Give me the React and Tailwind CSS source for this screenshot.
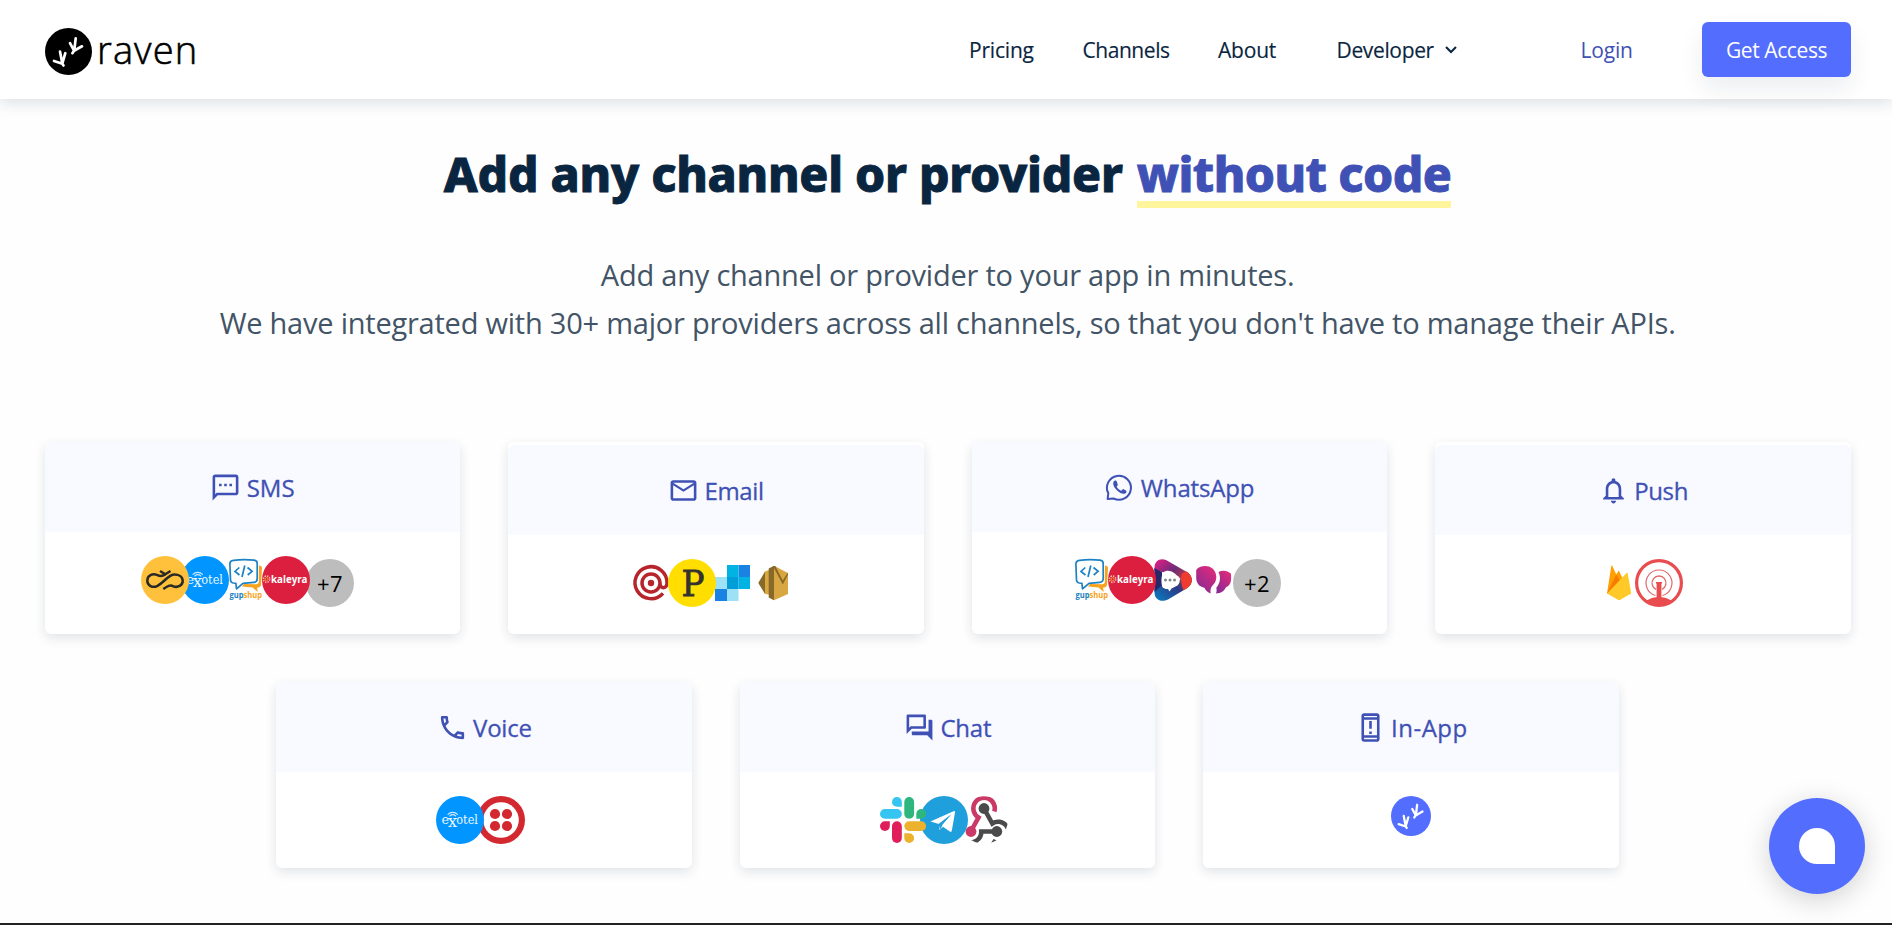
import {
  MdOutlineSms,
  MdMailOutline,
  MdNotificationsNone,
  MdOutlineForum,
  MdOutlinePermDeviceInformation,
  MdOutlineCall,
} from 'react-icons/md';

function Feet() {
  return (
    <g stroke="#fff" strokeWidth="2.7" strokeLinecap="round" strokeLinejoin="round" fill="none">
      <path d="M15 23.5 17.3 35.5 20.3 25.2M9 33 17.3 35.8 18.5 37.5" />
      <path d="M30.7 10.3 29.2 22.8 25 15.2M37 18.3 29 22.8 27.4 25.2" />
    </g>
  );
}

function RavenMark({ size, color }) {
  return (
    <svg width={size} height={size} viewBox="0 0 47 47" className="shrink-0">
      <circle cx="23.5" cy="23.5" r="23.5" fill={color} />
      <Feet />
    </svg>
  );
}

function WhatsAppIcon() {
  return (
    <svg width="31" height="31" viewBox="0 0 31 31" fill="none" className="shrink-0">
      <path
        d="M3.600 27 4.300 21.300A12 12 0 1 1 9.600 26.500L3.600 27Z"
        stroke="currentColor"
        strokeWidth="2"
        strokeLinejoin="round"
      />
      <path
        d="M11.2 8.6c-.9 0-2 1.300-2 3 0 1.300.6 3 2.300 5.200 2 2.600 4.700 4.700 7.700 5 1.800.2 3.300-1 3.300-2.400 0-.5-.2-.7-.6-1l-2.300-1.200c-.5-.2-.8-.1-1.100.3l-.9 1c-.3.3-.6.3-1 .1-1.600-.7-3-2-3.800-3.500-.2-.4-.1-.6.200-.9l.6-.8c.3-.4.2-.8.1-1.100l-.9-2.600c-.2-.6-.6-1.100-1.600-1.100Z"
        fill="currentColor"
      />
    </svg>
  );
}

function Logo({ children, className }) {
  return (
    <svg viewBox="0 0 48 48" className={`relative size-12 shrink-0 overflow-visible ${className}`}>
      {children}
    </svg>
  );
}

function Sinch({ className = '' }) {
  return (
    <Logo className={className}>
      <circle cx="24" cy="24" r="24" fill="#ffc13b" />
      <g fill="none" stroke="#2b2a26" strokeWidth="2.500" strokeLinejoin="round">
        <path d="M19 15 24.300 18.300 29.500 15" />
        <path d="M24.300 18.300C21 21 19 20.500 16.500 19.200 11.500 17 6.300 19.500 6.300 24.500s5.200 8 10.200 5.300c3.500-2 5.500-4 8-6.300 3.500-3.200 5.500-5 9-5 4 0 8.200 2 8.200 6.500s-5 7-9.500 5.300" />
        <path d="M32.500 30.300C29 28.500 26.500 30 22.300 33" />
      </g>
    </Logo>
  );
}

function Exotel({ className = '' }) {
  return (
    <Logo className={className}>
      <circle cx="24" cy="24" r="24" fill="#0095ff" />
      <g fill="#e8f5ff" fontFamily="'DejaVu Serif', serif" fontSize="12.500">
        <text x="5.500" y="27.800" textLength="7.500" lengthAdjust="spacingAndGlyphs">e</text>
        <text x="11.800" y="31.300" fontSize="16" textLength="9.500" lengthAdjust="spacingAndGlyphs">x</text>
        <text x="20.300" y="27.800" textLength="21.700" lengthAdjust="spacingAndGlyphs">otel</text>
      </g>
      <g fill="none" stroke="#cfeaff" strokeWidth="1.100" strokeLinecap="round">
        <path d="M12 18.300c2.500-2.600 7-2.600 9.500 0M13.800 20c1.800-1.600 4.200-1.600 6 0" />
      </g>
    </Logo>
  );
}

function Gupshup({ className = '' }) {
  return (
    <Logo className={className}>
      <path d="M38 9.500c2 .3 3.200 1 3 3l-1 16c-.2 2-1.200 2.800-3 3l-1 .2.800 4.300-5.300-4.500-10.500-1 2-2.500 12 .3c2 0 2.700-1 2.800-2.500Z" fill="#f8a31d" />
      <path d="M12.500 4.300C19 3.400 27 3.400 33 4.200c2 .3 3.200 1.300 3.200 3.300v15c0 2.500-1.300 3.700-3.500 3.900L22 27.300l-6.500 5.500-.6-5.400-2.700-.4c-1.600-.3-2.600-1.300-2.700-3L8.900 8c-.1-2.300 1.300-3.400 3.600-3.700Z" fill="#fff" stroke="#1c82c4" strokeWidth="1.700" strokeLinejoin="round" />
      <path d="M18.300 11.500 14 15.500l4.500 3.500M26.500 11.500l4.600 3.800-4.400 3.700M23.800 9.500 21 21" fill="none" stroke="#1c82c4" strokeWidth="1.700" />
      <g fontFamily="'Open Sans', sans-serif" fontWeight="700" fontSize="9">
        <text x="8.500" y="41.500" fill="#1c82c4" textLength="14" lengthAdjust="spacingAndGlyphs">gup</text>
        <text x="22.500" y="41.500" fill="#f8a31d" textLength="18.500" lengthAdjust="spacingAndGlyphs">shup</text>
      </g>
    </Logo>
  );
}

function Kaleyra({ className = '' }) {
  return (
    <Logo className={className}>
      <circle cx="24" cy="24" r="24" fill="#dc1f3e" />
      <circle cx="4.600" cy="23.200" r="3.200" fill="none" stroke="#f6b9a0" strokeWidth="1.500" strokeDasharray="1.500 1" />
      <circle cx="4.600" cy="23.200" r="1.500" fill="none" stroke="#f39a2c" strokeWidth="1" />
      <text x="9" y="26.800" fill="#fff" fontFamily="'Open Sans', sans-serif" fontWeight="700" fontSize="11" textLength="36.500" lengthAdjust="spacingAndGlyphs">kaleyra</text>
    </Logo>
  );
}

function More({ children, className = '' }) {
  return (
    <div className={`mt-[3px] flex size-12 shrink-0 items-center justify-center rounded-full bg-[#bdbdbd] pt-px text-[22px] tracking-[0.500px] text-black ${className}`}>
      {children}
    </div>
  );
}

function Mailgun({ className = '' }) {
  return (
    <Logo className={className}>
      <g fill="none" stroke="#b7252c" strokeWidth="3.500">
        <path d="M36 34.300A16 16 0 1 1 40 24.500c0 5.500-7.200 5.500-7.200 0" />
        <circle cx="24" cy="24" r="9" />
      </g>
      <circle cx="24" cy="24" r="3.200" fill="#b7252c" />
    </Logo>
  );
}

function Postmark({ className = '' }) {
  return (
    <Logo className={className}>
      <circle cx="24" cy="24" r="24" fill="#ffde00" />
      <text x="13.500" y="37" fill="#34312f" stroke="#34312f" strokeWidth=".8" fontFamily="'DejaVu Serif', serif" fontSize="35" textLength="23" lengthAdjust="spacingAndGlyphs">P</text>
    </Logo>
  );
}

function SendGrid({ className = '' }) {
  return (
    <Logo className={className}>
      <path fill="#9ce1f6" d="M6 18h12v12H6zM18 30h11.500v12H18z" />
      <path fill="#1a82e2" d="M6 30h12v12H6zM29.500 6H41v12H29.500z" />
      <path fill="#00b3e3" d="M18 6h11.500v12H18zM29.500 18H41v12H29.500z" />
      <path fill="#009dd9" d="M18 18h11.500v12H18z" />
    </Logo>
  );
}

function AmazonSes({ className = '' }) {
  return (
    <Logo className={className}>
      <path fill="#876929" d="M9.300 24 16 12.500v22.500z" />
      <path fill="#d9a741" d="M16 12.500 20 11v24.500l-4-.5z" />
      <path fill="#876929" d="M19.700 9.500 25 6.700V41.300l-5.300-2.800z" />
      <path fill="#d9a741" d="M25 6.700 39 14v21l-14 6.300z" />
      <path fill="#876929" d="M24 7.200 26.300 7 33.800 21.500 38.600 13.800 39 15.500 33.800 25.500z" />
    </Logo>
  );
}

function Triangle({ className = '' }) {
  return (
    <Logo className={className}>
      <defs>
        <linearGradient id="triTop" x1="0" y1="0" x2="1" y2="0.800">
          <stop offset="0" stopColor="#ec1c86" />
          <stop offset=".5" stopColor="#6b2c78" />
          <stop offset="1" stopColor="#f0402b" />
        </linearGradient>
        <linearGradient id="triBottom" x1="0" y1="1" x2="1" y2="0">
          <stop offset="0" stopColor="#0a7fc4" />
          <stop offset=".5" stopColor="#2b3a86" />
          <stop offset="1" stopColor="#f0402b" />
        </linearGradient>
      </defs>
      <path d="M6.500 12C6.500 5 12 1.500 18 4l20 11.500c7 4 7.500 12 1.500 16L30 20 6.500 14Z" fill="url(#triTop)" />
      <path d="M6.500 12 13 16c0 6-.5 9 2 16l16-7 7.500-9.500c7.500 4.500 7 13 0 17L20 43.500c-7 3.500-13.500 0-13.500-7Z" fill="url(#triBottom)" />
      <path d="M34 17.500 38 15.500c7.500 4.500 7.500 13 .5 17l-3 1.700c-2-5-3.500-11-1.500-16.700Z" fill="#ee3d2f" />
      <path d="M6.500 12.500 14 16v13l-7.500 7Z" fill="#27286a" />
      <path d="M18 15c5-1 9 2 12.500 6.500 2 3 1.500 5.500-1 8l-6 3-2 3-1.500-2.500c-4 .5-6.500-2-6.500-7 0-6 .5-10 4.500-11Z" fill="#fff" />
      <g fill="#83868c">
        <circle cx="17.500" cy="24" r="1.500" />
        <circle cx="22" cy="24" r="1.500" />
        <circle cx="26.500" cy="24" r="1.500" />
      </g>
    </Logo>
  );
}

function Bubbles({ className = '' }) {
  return (
    <Logo className={className}>
      <defs>
        <linearGradient id="bubble" x1="1" y1="0" x2="0.300" y2="1">
          <stop offset="0" stopColor="#ea2a78" />
          <stop offset="1" stopColor="#8a2b92" />
        </linearGradient>
      </defs>
      <path d="M6.200 11C9 6.500 18 5.500 22.500 9.500c4.800 4.300 5.200 12 .5 16.500-2 2-3 4.500-2.300 8.500-3-1-5-3-6.300-5.800C9.500 28 6.200 24 6.200 19Z" fill="url(#bubble)" />
      <path d="M28.500 13c4-2 9-1.500 12.500 1.800.3 6.500.5 11-5 13.500-1.800 3.800-5 6.200-10 6.200.8-2 .8-3.800.3-5.800 4-4.500 4.700-10.500 2.200-15.700Z" fill="url(#bubble)" />
    </Logo>
  );
}

function Firebase({ className = '' }) {
  return (
    <Logo className={className}>
      <path fill="#ffa000" d="M12 34.500 16.300 7c.2-.6.800-.6 1 0l4 8.500 1.900-3.300c.3-.5.800-.5 1 0L33 31Z" />
      <path fill="#f57c00" d="M12 34.500 21.300 15.500l5.200 8.500Z" />
      <path fill="#ffca28" d="M12 34.500 31.600 14c.4-.4 1-.3 1.100.3L36.200 34.500 25.300 40.800c-.8.4-1.600.4-2.400 0Z" />
    </Logo>
  );
}

function Antenna({ className = '' }) {
  return (
    <Logo className={className}>
      <clipPath id="antennaClip"><circle cx="24" cy="24" r="23" /></clipPath>
      <circle cx="24" cy="24" r="22.400" fill="#fff" stroke="#e84c4f" strokeWidth="3.200" />
      <g fill="none" stroke="#e0666a" strokeWidth="1.200">
        <path d="M20.500 36.500a13 13 0 1 1 7 0" />
        <path d="M21 30.300a7 7 0 1 1 6 0" strokeWidth="1.300" />
      </g>
      <path fill="#e84c4f" d="M21 23h6v1.500h-.6V40h-4.800V24.500H21z" />
      <ellipse cx="24" cy="48" rx="16" ry="10" fill="#e84c4f" clipPath="url(#antennaClip)" />
    </Logo>
  );
}

function Twilio({ className = '' }) {
  return (
    <Logo className={className}>
      <circle cx="24" cy="24" r="24" fill="#d3282f" />
      <circle cx="24" cy="24" r="17.800" fill="#fff" />
      <g fill="#d3282f">
        <circle cx="18" cy="18" r="5.100" />
        <circle cx="30" cy="18" r="5.100" />
        <circle cx="18" cy="30" r="5.100" />
        <circle cx="30" cy="30" r="5.100" />
      </g>
    </Logo>
  );
}

function Slack({ className = '' }) {
  return (
    <Logo className={className}>
      <rect x="1" y="13" width="21.800" height="9.800" rx="4.900" fill="#36c5f0" />
      <path d="M22.800 10.800h-4.900a4.900 4.900 0 1 1 4.900-4.900z" fill="#36c5f0" />
      <rect x="25.300" y="1" width="9.800" height="21.800" rx="4.900" fill="#2eb67d" />
      <path d="M37.300 22.800v-4.900a4.900 4.900 0 1 1 4.900 4.900z" fill="#2eb67d" />
      <path d="M10.800 25.200v4.900a4.900 4.900 0 1 1-4.900-4.900z" fill="#e01e5a" />
      <rect x="13" y="25.200" width="9.800" height="21.800" rx="4.900" fill="#e01e5a" />
      <rect x="25.300" y="25.200" width="21.800" height="9.800" rx="4.900" fill="#ecb22e" />
      <path d="M25.300 37.200h4.900a4.900 4.900 0 1 1-4.900 4.900z" fill="#ecb22e" />
    </Logo>
  );
}

function Telegram({ className = '' }) {
  return (
    <Logo className={className}>
      <circle cx="24" cy="24" r="24" fill="#1f9fdc" />
      <path d="M10.500 25.500 33.500 15.200c1-.4 1.700.2 1.500 1.300L31.800 34.800c-.2 1.100-1 1.400-2 .8l-6.800-4.800-3.500 3.200-.6-6Z" fill="#fff" />
      <path d="M18.500 28 31.500 18 22.300 29.500 20.200 33.800Z" fill="#1f9fdc" />
      <path d="M22 29.200 32.300 18 30 34Z" fill="#fff" />
    </Logo>
  );
}

function Webhook({ className = '' }) {
  return (
    <Logo className={className}>
      <clipPath id="webhookClip"><circle cx="24" cy="24" r="23.800" /></clipPath>
      <g clipPath="url(#webhookClip)" fill="none" strokeWidth="4.600">
        <path stroke="#4a4b4a" d="M24 12.500 32.300 27.500a10.500 10.500 0 1 1 0 17.500" />
        <path stroke="#4a4b4a" d="M4.500 27.500a10.500 10.500 0 1 0 16.800 8H36.500" />
        <path stroke="#cb3a66" d="M34.300 15.500A10.700 10.700 0 1 0 18.500 21.500L11 35" />
        <circle cx="24" cy="12.500" r="5.400" fill="#4a4b4a" stroke="none" />
        <circle cx="11" cy="35.500" r="5.400" fill="#cb3a66" stroke="none" />
        <circle cx="36.800" cy="35.500" r="5.400" fill="#4a4b4a" stroke="none" />
      </g>
    </Logo>
  );
}

function Card({ icon, label, labelClass = '', bodyClass, children, className = '' }) {
  return (
    <section className={`w-[415.500px] rounded-md bg-white shadow-[0_4px_12px_rgba(13,37,62,0.12)] ${className}`}>
      <div className="flex h-[90px] items-center justify-center gap-[5.500px] rounded-t-md bg-[#f9faff] text-[#3f51b5]">
        {icon}
        <span className={`mt-px text-2xl font-medium [-webkit-text-stroke:0.300px_#3f51b5] ${labelClass}`}>{label}</span>
      </div>
      <div className={`flex items-start pt-6 ${bodyClass}`}>{children}</div>
    </section>
  );
}

export default function App() {
  return (
    <div className="flex h-[925px] flex-col overflow-hidden bg-[#fefefe] font-['Open_Sans','Noto_Sans',sans-serif] text-[#0a2540]">
      <header className="flex h-[99px] shrink-0 items-center bg-white pr-[41px] pl-[45px] shadow-[0_4px_14px_rgba(13,37,62,0.14)]">
        <div className="flex items-center pt-[4px]">
          <RavenMark size={47} color="#000" />
          <span className="-mt-[4px] ml-[5px] text-[38px] leading-[47px] font-light tracking-[1.100px] text-black [-webkit-text-stroke:0.600px_#000]">raven</span>
        </div>
        <nav className="ml-auto flex items-center pt-[3px] text-[21px] font-medium [-webkit-text-stroke:0.150px_currentColor]">
          <a className="w-[113.500px] tracking-[-0.200px]">Pricing</a>
          <a className="w-[135.500px] tracking-[-0.450px]">Channels</a>
          <a className="w-[118.500px] tracking-[-0.200px]">About</a>
          <a className="flex w-[244px] items-center tracking-[-0.350px]">
            Developer
            <svg width="12" height="8" viewBox="0 0 12 8" className="-mt-[2px] ml-[11px]" fill="none" stroke="currentColor" strokeWidth="2">
              <path d="M1 1l5 5 5-5" />
            </svg>
          </a>
          <a className="w-[121.500px] font-normal tracking-[-0.200px] text-[#3f51b5] [-webkit-text-stroke:0]">Login</a>
        </nav>
        <button className="h-[55px] w-[149px] rounded-md bg-[#536dfe] pt-[3px] text-[21px] font-medium tracking-[-0.400px] text-white shadow-[0_12px_24px_rgba(13,37,62,0.08)]">
          Get Access
        </button>
      </header>

      <main className="pt-[47px] pr-[41.400px] pl-[44.600px]">
        <h1 className="flex justify-center gap-[14px] font-['Noto_Sans'] text-5xl leading-[55px] font-extrabold">
          <span className="tracking-[-0.250px] [-webkit-text-stroke:0.900px_#0a2540]">Add any channel or provider</span>
          <span className="border-b-[7px] border-[#fff59d] tracking-[-0.550px] text-[#3f51b5] [-webkit-text-stroke:0.900px_#3f51b5]">without code</span>
        </h1>
        <p className="mt-[43px] text-center text-[29px] leading-[48px] tracking-[-0.225px] text-[#425466]">
          Add any channel or provider to your app in minutes.
          <br />
          We have integrated with 30+ major providers across all channels, so that you don't have to manage their APIs.
        </p>

        <div className="mt-[95px] flex justify-between">
          <Card className="h-48" icon={<MdOutlineSms size={31} />} label="SMS" bodyClass="pl-24">
            <Sinch className="z-20" />
            <Exotel className="z-10 -ml-2" />
            <Gupshup className="-ml-2" />
            <Kaleyra className="z-10 -ml-[6.500px]" />
            <More className="-ml-[4px]">+7</More>
          </Card>
          <Card className="h-48 pt-[3px]" icon={<MdMailOutline size={31} />} label="Email" labelClass="tracking-[-0.400px]" bodyClass="pl-[119px]">
            <Mailgun />
            <Postmark className="z-10 -ml-[7px]" />
            <SendGrid className="-ml-[7px]" />
            <AmazonSes className="-ml-2" />
          </Card>
          <Card className="h-48" icon={<WhatsAppIcon />} label="WhatsApp" labelClass="tracking-[-0.150px]" bodyClass="pl-[95px]">
            <Gupshup />
            <Kaleyra className="z-10 -ml-[7px]" />
            <Triangle className="-ml-2" />
            <Bubbles className="mt-[3px] -ml-[6px]" />
            <More className="-ml-[4.500px]">+2</More>
          </Card>
          <Card className="h-48 pt-[3px]" icon={<MdNotificationsNone size={31} />} label="Push" labelClass="tracking-[-0.400px]" bodyClass="pl-40">
            <Firebase />
            <Antenna className="-ml-2" />
          </Card>
        </div>

        <div className="mt-12 flex justify-center gap-12">
          <Card className="h-[186px]" icon={<MdOutlineCall size={31} />} label="Voice" labelClass="tracking-[-0.250px]" bodyClass="pl-40">
            <Exotel className="z-10" />
            <Twilio className="-ml-[7px]" />
          </Card>
          <Card className="h-[186px]" icon={<MdOutlineForum size={31} />} label="Chat" labelClass="tracking-[-0.250px]" bodyClass="pl-[139px]">
            <Slack className="z-20" />
            <Telegram className="z-10 -ml-[7px]" />
            <Webhook className="-ml-[7.500px]" />
          </Card>
          <Card className="h-[186px]" icon={<MdOutlinePermDeviceInformation size={31} className="rotate-180" />} label="In-App" labelClass="tracking-[0.500px]" bodyClass="justify-center">
            <RavenMark size={40} color="#536dfe" />
          </Card>
        </div>
      </main>

      <div className="mt-auto h-[2px] shrink-0 bg-[#222]" />

      <button aria-label="Open chat" className="absolute top-[798px] left-[1769px] z-30 flex size-24 items-center justify-center rounded-full bg-[#536dfe] shadow-[0_6px_28px_rgba(0,0,0,0.180)]">
        <span className="size-9 rounded-full rounded-br-none bg-white" />
      </button>
    </div>
  );
}
